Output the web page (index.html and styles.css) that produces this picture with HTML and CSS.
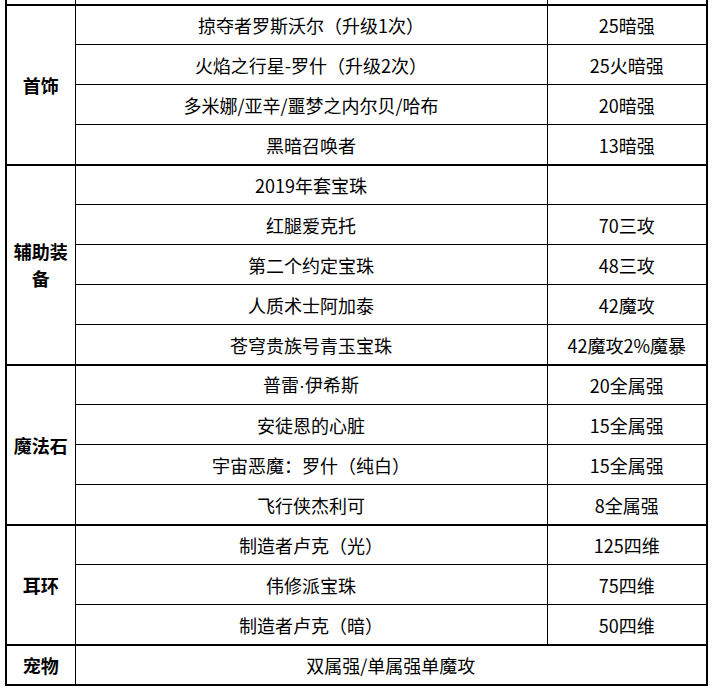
FILE: index.html
```html
<!DOCTYPE html>
<html lang="zh-CN">
<head>
<meta charset="utf-8">
<link rel="stylesheet" href="styles.css">
</head>
<body>
<table class="gear">
  <colgroup>
    <col class="c-cat">
    <col class="c-name">
    <col class="c-val">
  </colgroup>
  <tbody>
    <tr class="stub"><td></td><td></td><td></td></tr>
    <tr class="grp">
      <td class="cat" rowspan="4">首饰</td>
      <td>掠夺者罗斯沃尔（升级1次）</td>
      <td>25暗强</td>
    </tr>
    <tr><td>火焰之行星-罗什（升级2次）</td><td>25火暗强</td></tr>
    <tr><td>多米娜/亚辛/噩梦之内尔贝/哈布</td><td>20暗强</td></tr>
    <tr><td>黑暗召唤者</td><td>13暗强</td></tr>

    <tr class="grp">
      <td class="cat" rowspan="5">辅助装备</td>
      <td>2019年套宝珠</td>
      <td></td>
    </tr>
    <tr><td>红腿爱克托</td><td>70三攻</td></tr>
    <tr><td>第二个约定宝珠</td><td>48三攻</td></tr>
    <tr><td>人质术士阿加泰</td><td>42魔攻</td></tr>
    <tr><td>苍穹贵族号青玉宝珠</td><td>42魔攻2%魔暴</td></tr>

    <tr class="grp">
      <td class="cat" rowspan="4">魔法石</td>
      <td>普雷<span class="dot">·</span>伊希斯</td>
      <td>20全属强</td>
    </tr>
    <tr><td>安徒恩的心脏</td><td>15全属强</td></tr>
    <tr><td>宇宙恶魔：罗什（纯白）</td><td>15全属强</td></tr>
    <tr><td>飞行侠杰利可</td><td>8全属强</td></tr>

    <tr class="grp">
      <td class="cat" rowspan="3">耳环</td>
      <td>制造者卢克（光）</td>
      <td>125四维</td>
    </tr>
    <tr><td>伟修派宝珠</td><td>75四维</td></tr>
    <tr><td>制造者卢克（暗）</td><td>50四维</td></tr>

    <tr class="grp">
      <td class="cat">宠物</td>
      <td colspan="2">双属强/单属强单魔攻</td>
    </tr>
  </tbody>
</table>
</body>
</html>
```

FILE: styles.css
```css
html, body {
  margin: 0;
  padding: 0;
  background: #ffffff;
}

body {
  font-family: "Microsoft YaHei", "Noto Sans CJK SC", "Noto Sans", sans-serif;
  color: #000000;
}

.gear {
  border-collapse: collapse;
  table-layout: fixed;
  margin-left: 5px;
  width: 701px;
  border-left: 2px solid #000;
  border-right: 2px solid #000;
  border-bottom: 2px solid #000;
  font-size: 18px;
  line-height: 28px;
}

.c-cat { width: 69px; }
.c-name { width: 472px; }
.c-val { width: 160px; }

.gear td {
  border: 1px solid #000;
  height: 39px;
  padding: 0 2px;
  text-align: center;
  vertical-align: middle;
  white-space: nowrap;
}

.gear tr.stub td {
  border-top: none;
  height: 4px;
  padding: 0;
}

.gear tr.grp td {
  border-top: 2px solid #000;
  height: 38px;
}

.gear td.cat {
  font-weight: bold;
  white-space: normal;
  padding: 0 4px;
  line-height: 27px;
}

.dot {
  font-family: "Liberation Sans", "Noto Sans", sans-serif;
}
```
